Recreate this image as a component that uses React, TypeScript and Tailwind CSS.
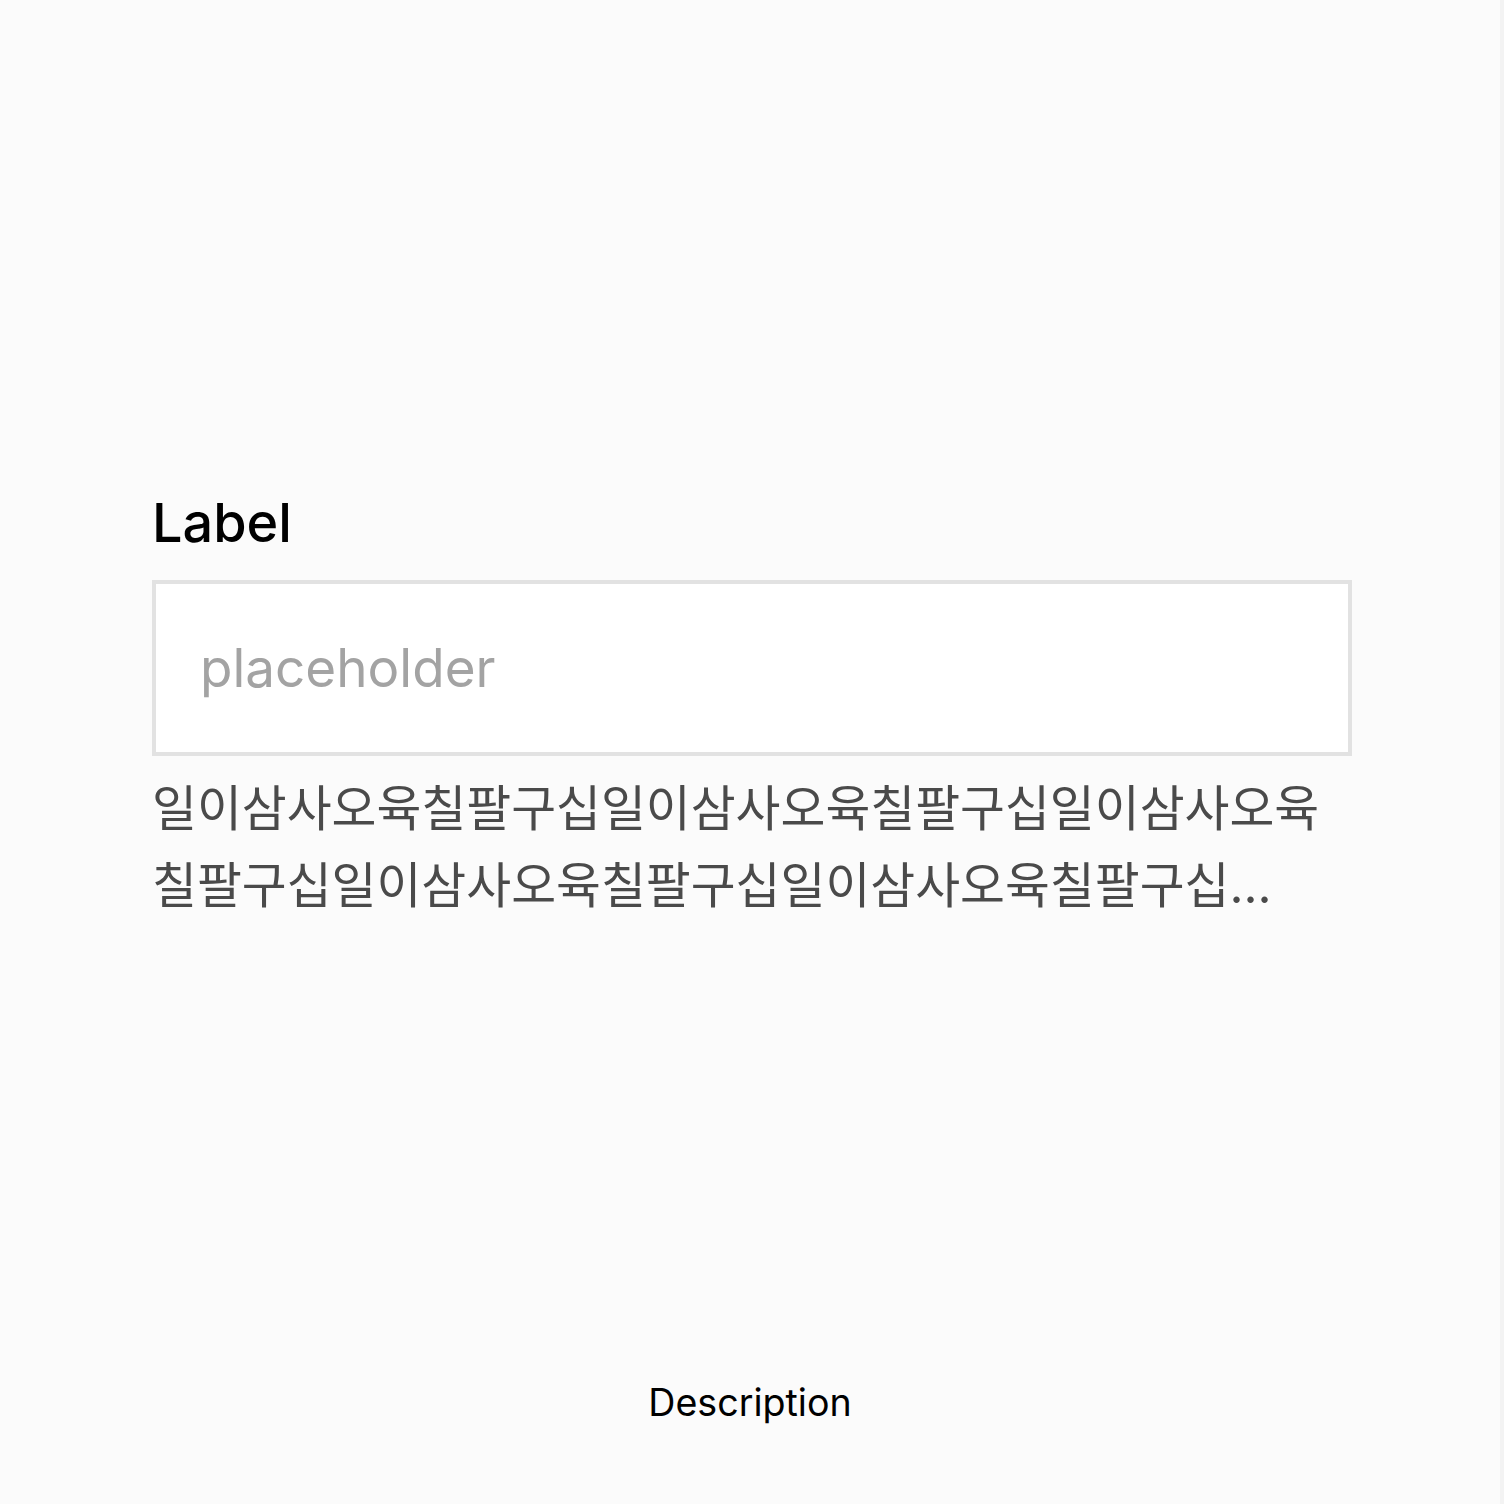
const helper = "일이삼사오육칠팔구십".repeat(5) + "...";

export default function App() {
  return (
    <div className="flex min-h-[1504px] w-full bg-[#fbfbfb] font-['Inter','Noto_Sans_CJK_KR',sans-serif]">
      <div className="flex flex-1 flex-col">
        <div className="pl-[152px] pt-[490px]">
          <div className="w-[1200px]">
            <label className="mb-[25px] block text-[54px] font-medium leading-[65px] text-black">
              Label
            </label>
            <input
              type="text"
              placeholder="placeholder"
              className="block h-[176px] w-full border-4 border-[#e2e2e2] bg-white px-[44px] text-[53px] text-black outline-none placeholder:text-[#a3a3a3]"
            />
            <p className="mt-[14px] line-clamp-2 break-all text-[48.8px] leading-[77px] text-[#4a4a4a]">
              {helper}
            </p>
          </div>
        </div>
        <p className="mt-auto pb-[78px] text-center text-[37.6px] leading-[46px] text-black">
          Description
        </p>
      </div>
      <div className="w-[4px] bg-[#f3f3f3]" />
    </div>
  );
}
